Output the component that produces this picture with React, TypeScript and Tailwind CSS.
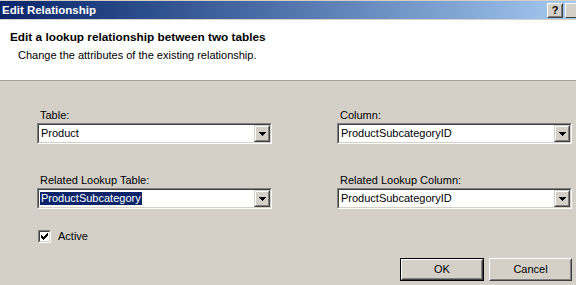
import React from "react";

const font = { fontFamily: '"Liberation Sans", Arial, sans-serif' };

function Combo({ value, selected }: { value: string; selected?: boolean }) {
  return (
    <div className="h-[21px] w-[235px] border border-t-[#808080] border-l-[#808080] border-r-white border-b-white">
      <div className="h-full w-full border border-t-[#404040] border-l-[#404040] border-r-[#d4d0c8] border-b-[#d4d0c8] bg-white flex items-center">
        <div className="flex-1 pl-[1px] flex items-center">
          <span
            className={
              selected
                ? "bg-[#0a246a] text-white px-[1px] leading-[13px] h-[13px]"
                : "text-black px-[1px] leading-[13px]"
            }
          >
            {value}
          </span>
        </div>
        <ArrowButton />
      </div>
    </div>
  );
}

function ArrowButton() {
  return (
    <div className="h-[17px] w-[16px] border border-t-[#d4d0c8] border-l-[#d4d0c8] border-r-[#404040] border-b-[#404040]">
      <div className="h-full w-full border border-t-white border-l-white border-r-[#808080] border-b-[#808080] bg-[#d4d0c8] flex items-center justify-center">
        <svg width="7" height="4" viewBox="0 0 7 4" className="block">
          <path d="M0 0H7L3.5 4Z" fill="#000" shapeRendering="crispEdges" />
        </svg>
      </div>
    </div>
  );
}

function Button({ label, isDefault }: { label: string; isDefault?: boolean }) {
  const inner = (
    <div className="h-full w-full border border-t-white border-l-white border-r-[#404040] border-b-[#404040]">
      <div className="h-full w-full border border-t-[#d4d0c8] border-l-[#d4d0c8] border-r-[#808080] border-b-[#808080] bg-[#d4d0c8] flex items-center justify-center text-[11px] text-black">
        {label}
      </div>
    </div>
  );
  if (isDefault) {
    return <div className="h-[23px] w-[84px] border border-black">{inner}</div>;
  }
  return <div className="h-[23px] w-[83px]">{inner}</div>;
}

export default function App() {
  return (
    <div
      className="w-[576px] h-[285px] overflow-hidden bg-[#d4d0c8] flex flex-col text-[11px] text-black"
      style={font}
    >
      {/* Title bar */}
      <div className="h-[1px] bg-[#d4d0c8]" />
      <div className="h-[18px] bg-gradient-to-r from-[#0a246a] to-[#a6caf0] flex items-center justify-between pl-[2px]">
        <span className="text-white font-bold text-[11.5px] leading-[14px]">Edit Relationship</span>
        <div className="flex items-center gap-[2px] pt-[1px] -mr-[5px]">
          <div className="h-[15px] w-[16px] border border-t-white border-l-white border-r-[#404040] border-b-[#404040]">
            <div className="h-full w-full border border-t-[#d4d0c8] border-l-[#d4d0c8] border-r-[#808080] border-b-[#808080] bg-[#d4d0c8] flex items-center justify-center">
              <span className="font-bold text-[11px] leading-[11px] text-black">?</span>
            </div>
          </div>
          <div className="h-[15px] w-[16px] border border-t-white border-l-white border-r-[#404040] border-b-[#404040] bg-[#d4d0c8]" />
        </div>
      </div>
      <div className="h-[1px] bg-[#d4d0c8]" />

      {/* Header */}
      <div className="h-[60px] bg-white pl-[10px] pt-[10px]">
        <div className="font-bold text-[11.8px] leading-[14px]">Edit a lookup relationship between two tables</div>
        <div className="pl-[8px] pt-[5px] leading-[13px]">Change the attributes of the existing relationship.</div>
      </div>
      <div className="h-[1px] bg-[#a0a0a0]" />

      {/* Body */}
      <div className="flex-1 pl-[37px] pt-[28px]">
        <div className="flex gap-[65px]">
          <div className="flex flex-col">
            <div className="leading-[13px] pl-[3px] mb-[1px]">Table:</div>
            <Combo value="Product" />
            <div className="leading-[13px] pl-[3px] mt-[30px] mb-[1px]">Related Lookup Table:</div>
            <Combo value="ProductSubcategory" selected />
          </div>
          <div className="flex flex-col">
            <div className="leading-[13px] pl-[3px] mb-[1px]">Column:</div>
            <Combo value="ProductSubcategoryID" />
            <div className="leading-[13px] pl-[3px] mt-[30px] mb-[1px]">Related Lookup Column:</div>
            <Combo value="ProductSubcategoryID" />
          </div>
        </div>

        <div className="flex items-center mt-[21px] pl-[1px]">
          <div className="h-[13px] w-[13px] border border-t-[#808080] border-l-[#808080] border-r-white border-b-white">
            <div className="h-full w-full border border-t-[#404040] border-l-[#404040] border-r-[#d4d0c8] border-b-[#d4d0c8] bg-white flex items-center justify-center">
              <svg width="7" height="7" viewBox="0 0 7 7" className="block">
                <path
                  d="M0 2h1v1h1v1h1v-1h1v-1h1v-1h1v-1h1v3h-1v1h-1v1h-1v1h-1v1h-1v-1h-1v-1h-1z"
                  fill="#000"
                  shapeRendering="crispEdges"
                />
              </svg>
            </div>
          </div>
          <span className="ml-[7px] leading-[13px]">Active</span>
        </div>

        <div className="flex justify-end gap-[5px] mt-[15px] pr-[4px]">
          <Button label="OK" isDefault />
          <Button label="Cancel" />
        </div>
      </div>
    </div>
  );
}
